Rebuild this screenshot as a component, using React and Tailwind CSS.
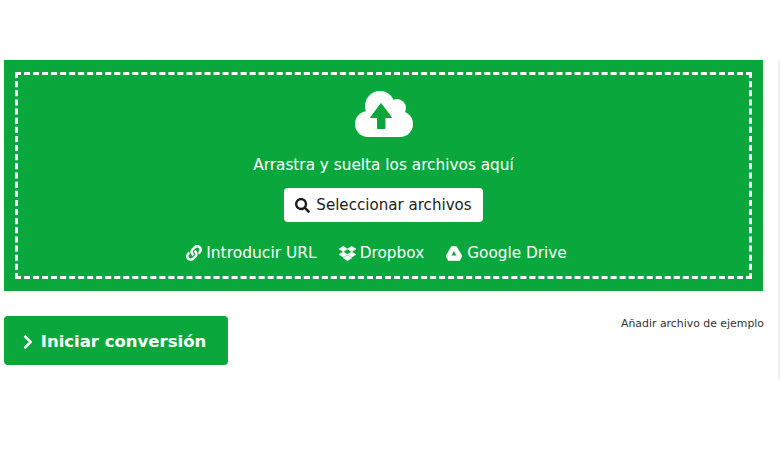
import React from "react";
import { FaSearch, FaLink, FaDropbox, FaChevronRight } from "react-icons/fa";

const font = "font-['Tahoma','DejaVu_Sans',sans-serif]";

// cloud with the up arrow, drawn since the icon packs' one is flatter
function CloudIcon() {
  return (
    <svg viewBox="0 0 58 46" className="h-[46px] w-[58px]">
      <circle cx="25" cy="15" r="15" fill="#fff" />
      <circle cx="42" cy="17" r="9" fill="#fff" />
      <circle cx="13" cy="33" r="13" fill="#fff" />
      <circle cx="45" cy="33" r="13" fill="#fff" />
      <rect x="13" y="20" width="32" height="26" fill="#fff" />
      <path
        d="M26 12.5 L36.5 26.5 H30 V37.5 H22.5 V26.5 H15.5 Z"
        fill="#0aa83c"
        stroke="#0aa83c"
        strokeWidth="1"
        strokeLinejoin="round"
      />
    </svg>
  );
}

function DriveIcon() {
  return (
    <svg viewBox="0 0 16 15" className="h-[15px] w-[16px]">
      <path d="M5.6 0.5 H10.4 L16 10 L13.6 14.5 H2.4 L0 10 Z" fill="#fff" strokeLinejoin="round" stroke="#fff" strokeWidth="0.6" />
      <path d="M8 5 L10.4 9.6 H5.6 Z" fill="#0aa83c" />
    </svg>
  );
}

export default function App() {
  return (
    <div className={`relative h-[470px] w-[780px] overflow-hidden bg-white ${font}`}>
      {/* thin edge of the sidebar that is cut off */}
      <div className="absolute right-0 top-[60px] h-[320px] w-[2px] bg-[#f1f1f1]" />

      <div className="ml-[4px] w-[760px] pt-[60px]">
        {/* ── Drop zone ─────────────────────────────────────────────── */}
        <div className="mr-[1px] h-[231px] bg-[#0aa83c] px-[11px] py-[12px]">
          <div className="flex h-[207px] flex-col items-center border-[3px] border-dashed border-white text-white">
            <div className="mt-[16px]">
              <CloudIcon />
            </div>
            <p className="mt-[16px] text-[15.3px] leading-[24px]">Arrastra y suelta los archivos aquí</p>
            <button className="mt-[11px] mr-[1px] flex h-[34px] w-[199px] items-center justify-center gap-[6px] rounded-[4px] bg-white pl-[1px] pt-[1px] text-[15.1px] text-[#1c1c1c]">
              <FaSearch className="text-[15px]" />
              Seleccionar archivos
            </button>
            <div className="mt-[19px] mr-[14px] flex items-center gap-[22px] text-[15.3px] leading-[24px]">
              <span className="flex items-center gap-[4px] text-[15.5px]">
                <FaLink className="text-[16px]" />
                Introducir URL
              </span>
              <span className="flex items-center gap-[4px]">
                <FaDropbox className="text-[17px]" stroke="currentColor" strokeWidth="14" />
                Dropbox
              </span>
              <span className="flex items-center gap-[5px]">
                <DriveIcon />
                Google Drive
              </span>
            </div>
          </div>
        </div>

        {/* ── Actions ───────────────────────────────────────────────── */}
        <div className="mt-[25px] flex items-start justify-between">
          <button className="flex h-[49px] w-[224px] items-center justify-center gap-[5px] rounded-[4px] bg-[#0aa83c] pr-[6px] pt-[3px] text-[16.5px] font-bold text-white">
            <FaChevronRight className="text-[16px]" />
            Iniciar conversión
          </button>
          <a className="pt-[1px] text-[10.9px] leading-[14px] text-[#333]">Añadir archivo de ejemplo</a>
        </div>
      </div>
    </div>
  );
}
